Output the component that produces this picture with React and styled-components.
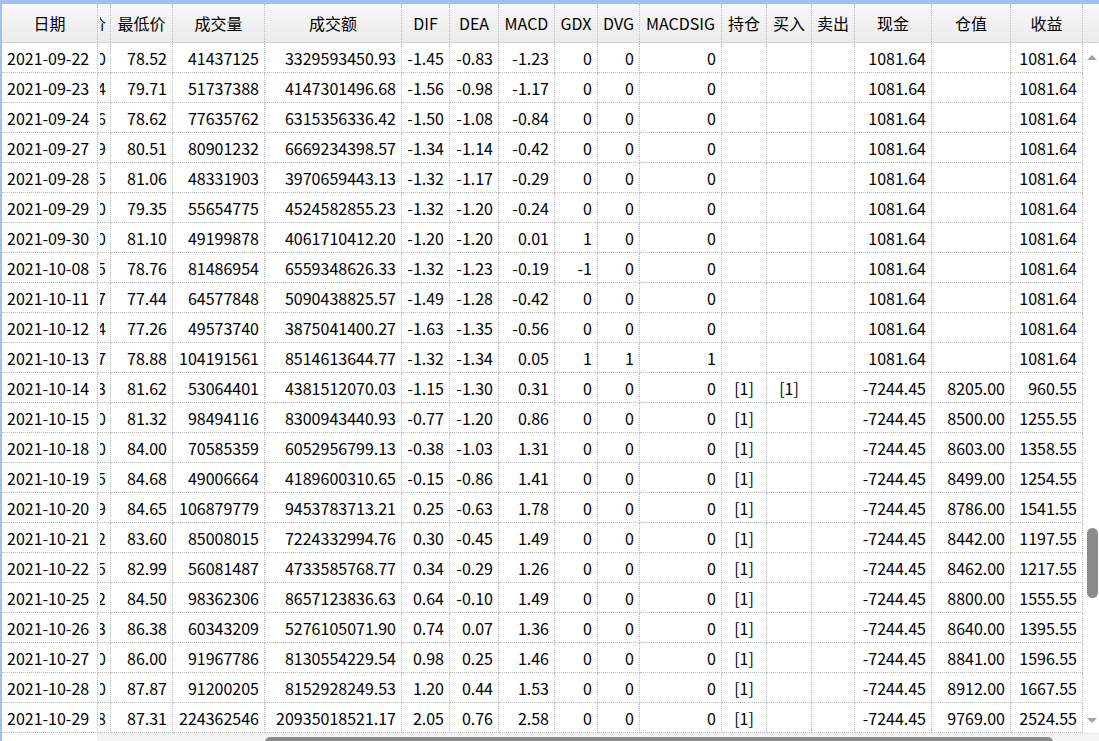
import React from 'react';
import styled, { createGlobalStyle } from 'styled-components';

const COLS = [96, 13, 62, 92, 137, 48, 49, 56, 43, 42, 82, 45, 45, 43, 77, 79, 72];
const TEMPLATE = COLS.map((w) => `${w}px`).join(' ');

const HEADERS = ['日期', '最高价', '最低价', '成交量', '成交额', 'DIF', 'DEA', 'MACD', 'GDX', 'DVG', 'MACDSIG', '持仓', '买入', '卖出', '现金', '仓值', '收益'];

const RAW = [
  ['2021-09-22', '80.30', '78.52', '41437125', '3329593450.93', '-1.45', '-0.83', '-1.23', '0', '0', '0', '', '', '', '1081.64', '', '1081.64'],
  ['2021-09-23', '81.54', '79.71', '51737388', '4147301496.68', '-1.56', '-0.98', '-1.17', '0', '0', '0', '', '', '', '1081.64', '', '1081.64'],
  ['2021-09-24', '81.26', '78.62', '77635762', '6315356336.42', '-1.50', '-1.08', '-0.84', '0', '0', '0', '', '', '', '1081.64', '', '1081.64'],
  ['2021-09-27', '83.19', '80.51', '80901232', '6669234398.57', '-1.34', '-1.14', '-0.42', '0', '0', '0', '', '', '', '1081.64', '', '1081.64'],
  ['2021-09-28', '82.95', '81.06', '48331903', '3970659443.13', '-1.32', '-1.17', '-0.29', '0', '0', '0', '', '', '', '1081.64', '', '1081.64'],
  ['2021-09-29', '82.00', '79.35', '55654775', '4524582855.23', '-1.32', '-1.20', '-0.24', '0', '0', '0', '', '', '', '1081.64', '', '1081.64'],
  ['2021-09-30', '83.20', '81.10', '49199878', '4061710412.20', '-1.20', '-1.20', '0.01', '1', '0', '0', '', '', '', '1081.64', '', '1081.64'],
  ['2021-10-08', '82.35', '78.76', '81486954', '6559348626.33', '-1.32', '-1.23', '-0.19', '-1', '0', '0', '', '', '', '1081.64', '', '1081.64'],
  ['2021-10-11', '80.17', '77.44', '64577848', '5090438825.57', '-1.49', '-1.28', '-0.42', '0', '0', '0', '', '', '', '1081.64', '', '1081.64'],
  ['2021-10-12', '79.24', '77.26', '49573740', '3875041400.27', '-1.63', '-1.35', '-0.56', '0', '0', '0', '', '', '', '1081.64', '', '1081.64'],
  ['2021-10-13', '83.07', '78.88', '104191561', '8514613644.77', '-1.32', '-1.34', '0.05', '1', '1', '1', '', '', '', '1081.64', '', '1081.64'],
  ['2021-10-14', '83.63', '81.62', '53064401', '4381512070.03', '-1.15', '-1.30', '0.31', '0', '0', '0', '[1]', '[1]', '', '-7244.45', '8205.00', '960.55'],
  ['2021-10-15', '85.50', '81.32', '98494116', '8300943440.93', '-0.77', '-1.20', '0.86', '0', '0', '0', '[1]', '', '', '-7244.45', '8500.00', '1255.55'],
  ['2021-10-18', '87.00', '84.00', '70585359', '6052956799.13', '-0.38', '-1.03', '1.31', '0', '0', '0', '[1]', '', '', '-7244.45', '8603.00', '1358.55'],
  ['2021-10-19', '86.45', '84.68', '49006664', '4189600310.65', '-0.15', '-0.86', '1.41', '0', '0', '0', '[1]', '', '', '-7244.45', '8499.00', '1254.55'],
  ['2021-10-20', '89.89', '84.65', '106879779', '9453783713.21', '0.25', '-0.63', '1.78', '0', '0', '0', '[1]', '', '', '-7244.45', '8786.00', '1541.55'],
  ['2021-10-21', '86.72', '83.60', '85008015', '7224332994.76', '0.30', '-0.45', '1.49', '0', '0', '0', '[1]', '', '', '-7244.45', '8442.00', '1197.55'],
  ['2021-10-22', '85.45', '82.99', '56081487', '4733585768.77', '0.34', '-0.29', '1.26', '0', '0', '0', '[1]', '', '', '-7244.45', '8462.00', '1217.55'],
  ['2021-10-25', '88.92', '84.50', '98362306', '8657123836.63', '0.64', '-0.10', '1.49', '0', '0', '0', '[1]', '', '', '-7244.45', '8800.00', '1555.55'],
  ['2021-10-26', '88.03', '86.38', '60343209', '5276105071.90', '0.74', '0.07', '1.36', '0', '0', '0', '[1]', '', '', '-7244.45', '8640.00', '1395.55'],
  ['2021-10-27', '88.80', '86.00', '91967786', '8130554229.54', '0.98', '0.25', '1.46', '0', '0', '0', '[1]', '', '', '-7244.45', '8841.00', '1596.55'],
  ['2021-10-28', '90.00', '87.87', '91200205', '8152928249.53', '1.20', '0.44', '1.53', '0', '0', '0', '[1]', '', '', '-7244.45', '8912.00', '1667.55'],
  ['2021-10-29', '98.98', '87.31', '224362546', '20935018521.17', '2.05', '0.76', '2.58', '0', '0', '0', '[1]', '', '', '-7244.45', '9769.00', '2524.55'],
];

const ALIGN = (i) => {
  if (i === 0) return 'left';
  if (i === 11 || i === 12 || i === 13) return 'center';
  return 'right';
};

const Global = createGlobalStyle`
  html, body { margin: 0; padding: 0; background: #ffffff; overflow: hidden; }
  body { font-family: "Noto Sans CJK SC", "Noto Sans", sans-serif; }
`;

const Frame = styled.div`
  width: 1099px;
  height: 741px;
  box-sizing: border-box;
  border-top: 4px solid #a2c0ea;
  border-left: 2px solid #a2c0ea;
  display: grid;
  grid-template-columns: 1081px 1fr;
  grid-template-rows: 39px 690px 1fr;
  font-size: 16px;
  color: #000;
  overflow: hidden;
  background: #fff;
`;

const HeaderBar = styled.div`
  grid-column: 1 / -1;
  display: grid;
  grid-template-columns: ${TEMPLATE} 1fr;
  background: linear-gradient(#f8f8f8, #ebebeb);
  border-bottom: 1px solid #d2d2d2;
  box-sizing: border-box;
`;

const HeadCell = styled.div`
  box-sizing: border-box;
  display: flex;
  align-items: center;
  justify-content: ${(p) => (p.$clip ? 'flex-end' : 'center')};
  padding: ${(p) => (p.$clip ? '0 4px 0 2px' : '0')};
  border-right: 1px dotted #bdbdbd;
  white-space: nowrap;
  overflow: hidden;
  line-height: 1;
`;

const Body = styled.div`
  grid-column: 1;
  display: flex;
  flex-direction: column;
  overflow: hidden;
`;

const Row = styled.div`
  display: grid;
  grid-template-columns: ${TEMPLATE};
  height: 30px;
  flex: none;
`;

const Cell = styled.div`
  box-sizing: border-box;
  display: flex;
  align-items: center;
  justify-content: ${(p) => (p.$align === 'left' ? 'flex-start' : p.$align === 'center' ? 'center' : 'flex-end')};
  padding: ${(p) => (p.$clip ? '0 4px 0 2px' : '0 5px')};
  border-right: 1px dotted #bdbdbd;
  border-bottom: 1px dotted #bdbdbd;
  white-space: nowrap;
  overflow: hidden;
  line-height: 1;
`;

const ClipText = styled.span`
  display: flex;
  justify-content: flex-end;
  width: 100%;
  overflow: hidden;
  white-space: nowrap;
`;

const VScroll = styled.div`
  grid-column: 2;
  grid-row: 2;
  position: relative;
  background: #ffffff;
`;

const Arrow = styled.div`
  position: absolute;
  left: 4px;
  ${(p) => (p.$down ? 'bottom: 10px;' : 'top: 12px;')}
  width: 0;
  height: 0;
  border-left: 5px solid transparent;
  border-right: 5px solid transparent;
  ${(p) => (p.$down ? 'border-top: 5px solid #a3a3a3;' : 'border-bottom: 5px solid #a3a3a3;')}
`;

const VThumb = styled.div`
  position: absolute;
  left: 4px;
  width: 11px;
  height: 70px;
  border-radius: 6px;
  background: #8b8b8b;
`;

const HScroll = styled.div`
  grid-column: 1 / -1;
  grid-row: 3;
  display: grid;
  grid-template-columns: 95px 1fr;
`;

const HTrack = styled.div`
  position: relative;
  background: #f4f4f4;
  border-top: 1px solid #ececec;
`;

const HThumb = styled.div`
  position: absolute;
  top: 3px;
  height: 10px;
  border-radius: 6px;
  background: #8b8b8b;
`;

export default function App() {
  return (
    <>
      <Global />
      <Frame>
        <HeaderBar>
          {HEADERS.map((h, i) => (
            <HeadCell key={h} $clip={i === 1}>
              {i === 1 ? <ClipText>{h}</ClipText> : h}
            </HeadCell>
          ))}
          <div />
        </HeaderBar>
        <Body>
          {RAW.map((row) => (
            <Row key={row[0]}>
              {row.map((v, i) => (
                <Cell key={i} $align={ALIGN(i)} $clip={i === 1}>
                  {i === 1 ? <ClipText>{v}</ClipText> : v}
                </Cell>
              ))}
            </Row>
          ))}
        </Body>
        <VScroll>
          <Arrow />
          <VThumb style={{ top: `${Math.round(690 * 0.703)}px` }} />
          <Arrow $down />
        </VScroll>
        <HScroll>
          <div />
          <HTrack>
            <HThumb style={{ left: '168px', width: '788px' }} />
          </HTrack>
        </HScroll>
      </Frame>
    </>
  );
}
